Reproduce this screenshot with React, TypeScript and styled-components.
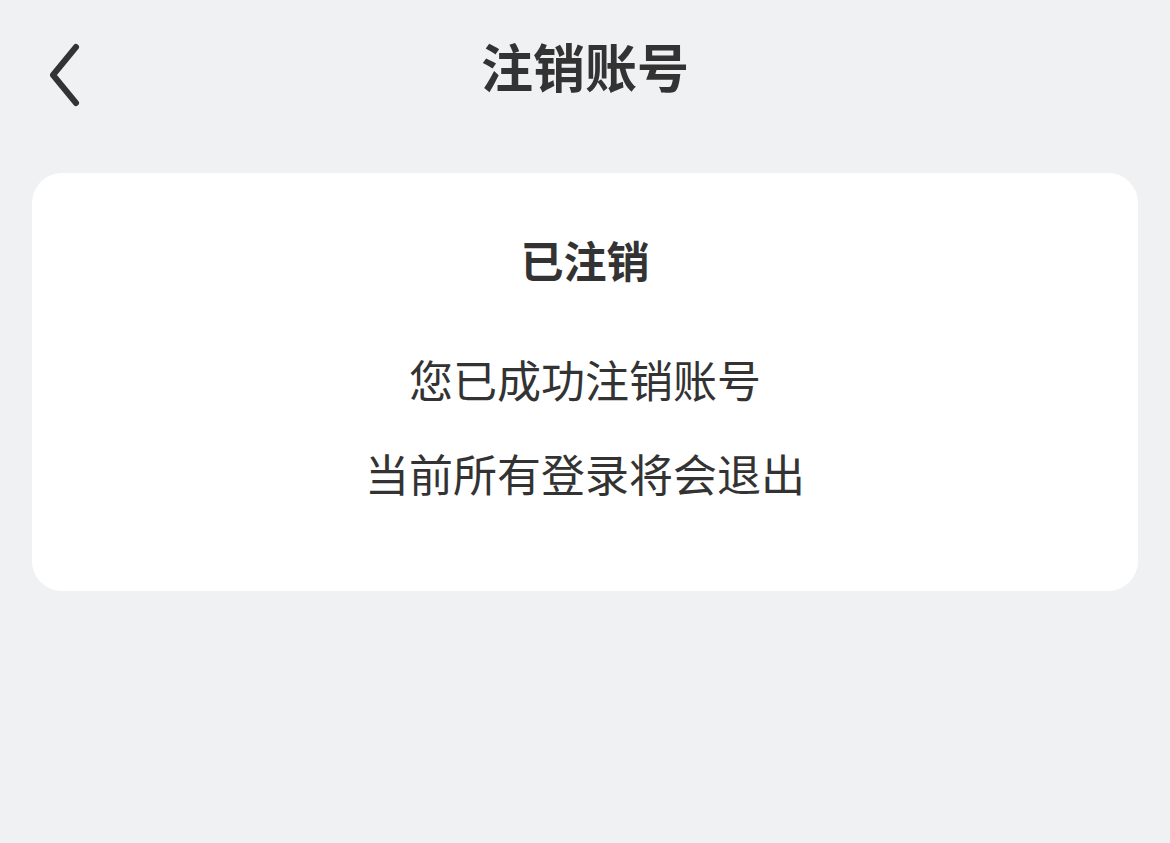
import React from 'react';
import styled, { createGlobalStyle } from 'styled-components';

const Global = createGlobalStyle`
  html, body {
    margin: 0;
    padding: 0;
    background: #f0f1f3;
    font-family: "Noto Sans CJK SC", "Noto Sans", sans-serif;
    color: #333333;
  }
`;

const S = {
  Page: styled.div`
    width: 1170px;
    height: 843px;
    background: #f0f1f3;
    overflow: hidden;
  `,
  Header: styled.header`
    position: relative;
    height: 132px;
    display: flex;
    align-items: center;
    justify-content: center;
  `,
  Back: styled.button`
    position: absolute;
    left: 36px;
    top: 36px;
    width: 56px;
    height: 76px;
    padding: 0;
    border: 0;
    background: none;
    display: flex;
    align-items: center;
    justify-content: center;
  `,
  Title: styled.h1`
    margin: 0;
    font-size: 52px;
    line-height: 70px;
    font-weight: 700;
    color: #333333;
  `,
  Card: styled.section`
    margin: 41px 32px 0;
    background: #ffffff;
    border-radius: 30px;
    padding: 56px 0 88px;
    display: flex;
    flex-direction: column;
    align-items: center;
  `,
  Heading: styled.h2`
    margin: 0;
    font-size: 43px;
    line-height: 60px;
    font-weight: 700;
    color: #333333;
  `,
  Line: styled.p<{ $gap: number }>`
    margin: ${(p) => p.$gap}px 0 0;
    font-size: 44px;
    line-height: 60px;
    font-weight: 400;
    color: #333333;
  `,
};

export default function App() {
  return (
    <S.Page>
      <Global />
      <S.Header>
        <S.Back aria-label="返回">
          <svg width="44" height="66" viewBox="0 0 44 66" fill="none">
            <path
              d="M34 6 L11 34 L34 62"
              stroke="#333333"
              strokeWidth="6"
              strokeLinecap="round"
              strokeLinejoin="round"
            />
          </svg>
        </S.Back>
        <S.Title>注销账号</S.Title>
      </S.Header>
      <S.Card>
        <S.Heading>已注销</S.Heading>
        <S.Line $gap={60}>您已成功注销账号</S.Line>
        <S.Line $gap={34}>当前所有登录将会退出</S.Line>
      </S.Card>
    </S.Page>
  );
}
